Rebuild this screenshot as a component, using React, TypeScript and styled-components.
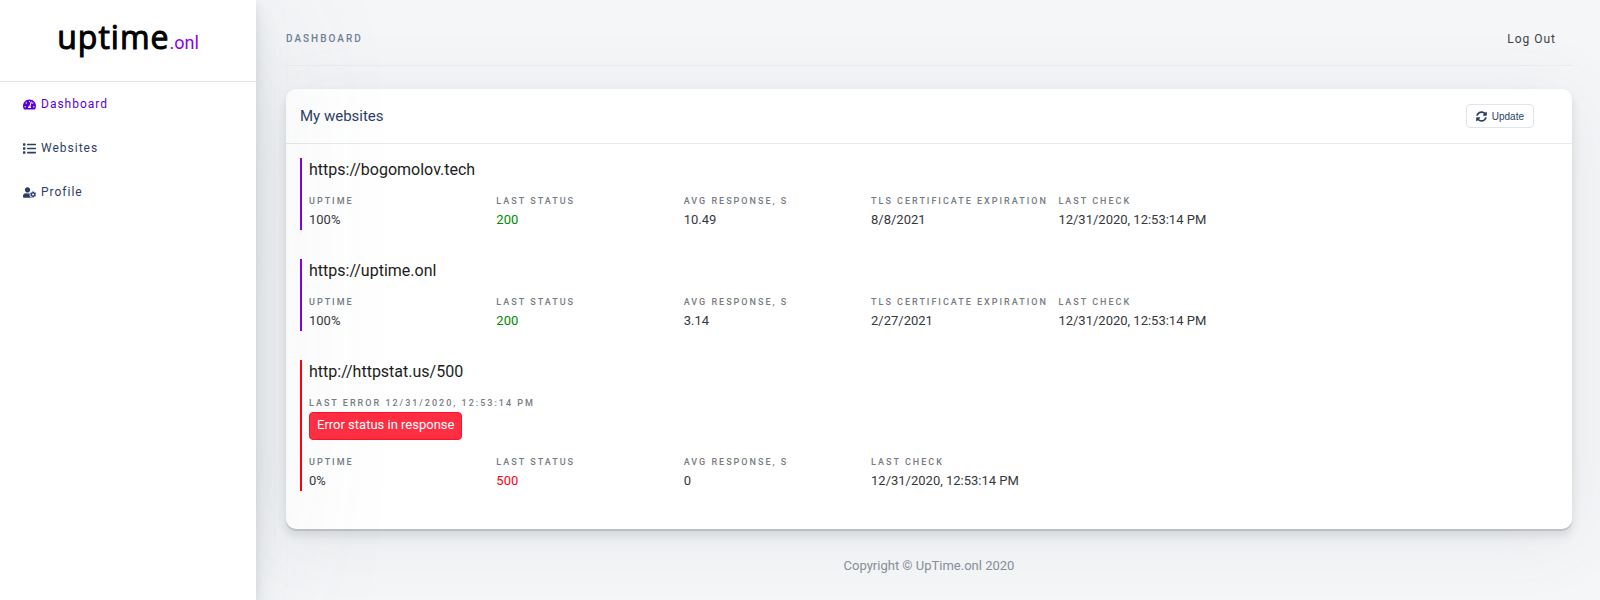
import React from "react";
import styled, { createGlobalStyle } from "styled-components";
import { FaTachometerAlt, FaList, FaUserCog, FaSyncAlt } from "react-icons/fa";

const GlobalStyle = createGlobalStyle`
  *, *::before, *::after { box-sizing: border-box; }
  body {
    margin: 0;
    background: #f5f6f8;
    color: #5a6169;
    font-family: Roboto, "Liberation Sans", sans-serif;
    font-size: 13px;
    line-height: 20px;
  }
  h1, h2, h3, dl, dd, ul, p { margin: 0; padding: 0; font-weight: 400; }
  a { color: inherit; text-decoration: none; }
`;

const Layout = styled.div`
  display: grid;
  grid-template-columns: 16% 1fr;
  min-height: 100vh;
`;

const Sidebar = styled.aside`
  position: relative;
  z-index: 1;
  background: #fff;
  box-shadow:
    0 2px 150px rgba(90, 97, 105, 0.1),
    0 4px 8px rgba(90, 97, 105, 0.12),
    0 15px 22px rgba(90, 97, 105, 0.1),
    0 7px 35px rgba(165, 182, 201, 0.1);
`;

const Logo = styled.a`
  display: flex;
  align-items: baseline;
  justify-content: center;
  height: 82px;
  padding-top: 15px;
  border-bottom: 1px solid #e1e5eb;
  line-height: 44px;
`;

const LogoName = styled.span`
  color: #000;
  font-family: "Open Sans", sans-serif;
  font-size: 32px;
  font-weight: 400;
  letter-spacing: 1px;
  -webkit-text-stroke: 1px #000;
`;

const LogoSuffix = styled.span`
  color: #8a00e6;
  font-size: 18px;
`;

const NavList = styled.ul`
  list-style: none;
`;

const NavLink = styled.a<{ $active?: boolean }>`
  display: flex;
  align-items: center;
  gap: 5px;
  padding: 12px 23px;
  color: ${({ $active }) => ($active ? "#5a00d6" : "#2c3e66")};
  font-size: 12px;
  letter-spacing: 1px;

  svg {
    width: auto;
    height: 13px;
  }
`;

const Main = styled.main`
  padding: 0 28px 0 30px;
`;

const TopBar = styled.header`
  display: flex;
  align-items: center;
  justify-content: space-between;
  height: 66px;
  padding: 12px 16px 0 0;
  border-bottom: 1px solid #eceef1;
`;

const PageTitle = styled.h1`
  color: #6f7f99;
  font-size: 10px;
  font-weight: 500;
  letter-spacing: 2px;
  text-transform: uppercase;
`;

const LogOut = styled.a`
  color: #3d4146;
  font-size: 12px;
  letter-spacing: 1px;
`;

const Card = styled.section`
  margin-top: 23px;
  border-radius: 10px;
  background: #fff;
  box-shadow:
    0 2px 0 rgba(90, 97, 105, 0.2),
    0 4px 8px rgba(90, 97, 105, 0.12),
    0 10px 10px rgba(90, 97, 105, 0.06),
    0 7px 70px rgba(90, 97, 105, 0.1);
`;

const CardHeader = styled.header`
  display: flex;
  align-items: center;
  justify-content: space-between;
  height: 55px;
  padding: 0 38px 0 14px;
  border-bottom: 1px solid #e6e9ee;
`;

const CardTitle = styled.h2`
  color: #2c3e66;
  font-size: 15px;
`;

const UpdateButton = styled.button`
  display: flex;
  align-items: center;
  gap: 5px;
  height: 24px;
  padding: 0 9px;
  border: 1px solid #e1e5eb;
  border-radius: 4px;
  background: #fff;
  color: #2c3e66;
  font-family: "Liberation Sans", sans-serif;
  font-size: 10px;

  svg {
    width: 11px;
    height: 11px;
  }
`;

const SiteList = styled.div`
  display: flex;
  flex-direction: column;
  gap: 29px;
  padding: 14px 14px 38px;
`;

const Site = styled.article<{ $down?: boolean }>`
  padding-left: 7px;
  border-left: 2px solid ${({ $down }) => ($down ? "#ff0010" : "#8000e6")};
`;

const SiteUrl = styled.h3`
  color: #1b1d20;
  font-size: 16px;
  line-height: 24px;
`;

const Stats = styled.dl`
  display: grid;
  grid-template-columns: repeat(auto-fill, 15%);
  margin-top: 10px;
`;

const Label = styled.dt`
  color: #767c82;
  font-size: 9px;
  font-weight: 500;
  line-height: 18px;
  letter-spacing: 2px;
  text-transform: uppercase;
  white-space: nowrap;
`;

const Value = styled.dd<{ $tone?: string }>`
  color: ${({ $tone }) => $tone ?? "#35383c"};
`;

const ErrorBlock = styled.div`
  margin-top: 10px;
  padding-bottom: 3px;
`;

const ErrorTime = styled(Label).attrs({ as: "p" })``;

const ErrorMessage = styled.p`
  width: fit-content;
  padding: 2px 7px 4px;
  border: 1px solid #ff1128;
  border-radius: 4px;
  background: #ff2e43;
  color: #fff;
`;

const Footer = styled.footer`
  padding: 27px 0 24px;
  color: #868e96;
  text-align: center;
`;

const NAV = [
  { label: "Dashboard", icon: FaTachometerAlt, active: true },
  { label: "Websites", icon: FaList },
  { label: "Profile", icon: FaUserCog },
];

type Stat = { label: string; value: string; tone?: string };
type SiteData = { url: string; error?: { time: string; message: string }; stats: Stat[] };

const CHECKED = "12/31/2020, 12:53:14 PM";

const SITES: SiteData[] = [
  {
    url: "https://bogomolov.tech",
    stats: [
      { label: "Uptime", value: "100%" },
      { label: "Last status", value: "200", tone: "#008a00" },
      { label: "Avg response, s", value: "10.49" },
      { label: "TLS certificate expiration", value: "8/8/2021" },
      { label: "Last check", value: CHECKED },
    ],
  },
  {
    url: "https://uptime.onl",
    stats: [
      { label: "Uptime", value: "100%" },
      { label: "Last status", value: "200", tone: "#008a00" },
      { label: "Avg response, s", value: "3.14" },
      { label: "TLS certificate expiration", value: "2/27/2021" },
      { label: "Last check", value: CHECKED },
    ],
  },
  {
    url: "http://httpstat.us/500",
    error: { time: CHECKED, message: "Error status in response" },
    stats: [
      { label: "Uptime", value: "0%" },
      { label: "Last status", value: "500", tone: "#ff0010" },
      { label: "Avg response, s", value: "0" },
      { label: "Last check", value: CHECKED },
    ],
  },
];

export default function App() {
  return (
    <>
      <GlobalStyle />
      <Layout>
        <Sidebar>
          <Logo href="#">
            <LogoName>uptime</LogoName>
            <LogoSuffix>.onl</LogoSuffix>
          </Logo>
          <nav>
            <NavList>
              {NAV.map(({ label, icon: Icon, active }) => (
                <li key={label}>
                  <NavLink href="#" $active={active}>
                    <Icon />
                    {label}
                  </NavLink>
                </li>
              ))}
            </NavList>
          </nav>
        </Sidebar>
        <Main>
          <TopBar>
            <PageTitle>Dashboard</PageTitle>
            <LogOut href="#">Log Out</LogOut>
          </TopBar>
          <Card>
            <CardHeader>
              <CardTitle>My websites</CardTitle>
              <UpdateButton type="button">
                <FaSyncAlt />
                Update
              </UpdateButton>
            </CardHeader>
            <SiteList>
              {SITES.map(({ url, error, stats }) => (
                <Site key={url} $down={Boolean(error)}>
                  <SiteUrl>{url}</SiteUrl>
                  {error && (
                    <ErrorBlock>
                      <ErrorTime>Last error {error.time}</ErrorTime>
                      <ErrorMessage>{error.message}</ErrorMessage>
                    </ErrorBlock>
                  )}
                  <Stats>
                    {stats.map(({ label, value, tone }) => (
                      <div key={label}>
                        <Label>{label}</Label>
                        <Value $tone={tone}>{value}</Value>
                      </div>
                    ))}
                  </Stats>
                </Site>
              ))}
            </SiteList>
          </Card>
          <Footer>Copyright © UpTime.onl 2020</Footer>
        </Main>
      </Layout>
    </>
  );
}
